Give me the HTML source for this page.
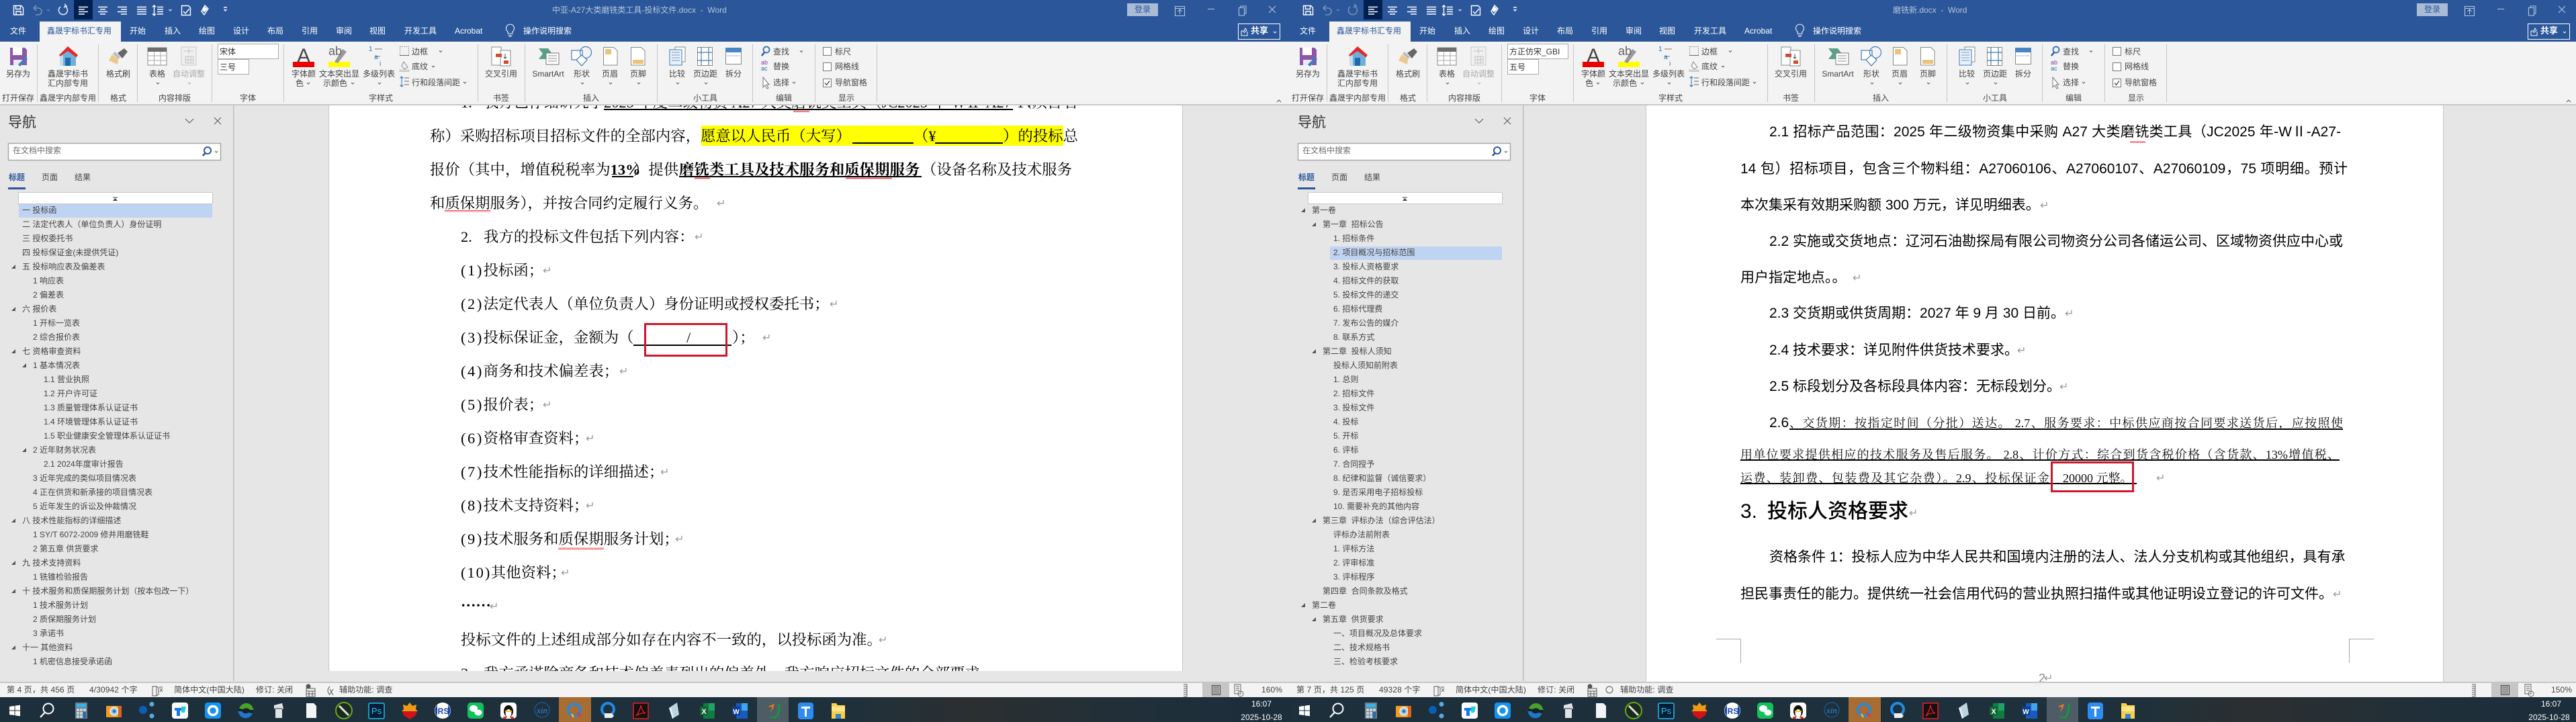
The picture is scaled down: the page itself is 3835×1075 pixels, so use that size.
<!DOCTYPE html>
<html lang="zh-CN"><head><meta charset="utf-8"><title>Word</title>
<style>
*{box-sizing:border-box}
html,body{margin:0;padding:0;width:3835px;height:1075px;overflow:hidden;background:#e6e6e6}
.w{position:absolute;top:0;height:1075px;overflow:hidden;font:12px/16px "Liberation Sans","Noto Sans CJK SC",sans-serif;color:#444;background:#e6e6e6}
.a{position:absolute;white-space:nowrap}
.c{transform:translateX(-50%)}
.r0{position:absolute}
.lab{top:138px}.l1{top:102px}.l2x{top:116px}
.ww{color:#fff}
.ti{top:7px;color:#b4c4dc}
.tab{top:38px;color:#fff}
svg.o{position:absolute;left:0;top:0}
.nav{position:absolute;left:0;top:303px;width:345px}
.n{position:relative;height:21px;line-height:21px;padding-left:33px;white-space:pre;color:#444}
.n.b{padding-left:49px}.n.e{padding-left:65px}
.n.t::before{content:"";position:absolute;left:17px;top:7px;width:6px;height:6px;background:#555;clip-path:polygon(100% 0,100% 100%,0 100%)}
.n.b.t::before{left:33px}
.doc{position:absolute;left:0;top:0;width:100%;height:100%}
.d1{position:absolute;white-space:nowrap;font:22.4px/30px "Liberation Serif","Noto Serif CJK SC",serif;color:#000}
.d2{position:absolute;white-space:nowrap;font:21px/30px "Liberation Sans","Noto Sans CJK SC",sans-serif;color:#000}
.d3{position:absolute;white-space:nowrap;font:18px/26px "Liberation Serif","Noto Serif CJK SC",serif;color:#111}
.j{text-align:justify;text-align-last:justify}
.q{display:inline-block;width:33.6px;text-align:center;letter-spacing:2.6px}
.q2{display:inline-block;width:44.8px;text-align:center;letter-spacing:2px}
.r{position:absolute;font:16px/20px "DejaVu Sans",sans-serif;color:#999}
.u{position:absolute;height:2px;background:#000}
.st{top:1019px;color:#444;letter-spacing:.1px}
.clk{color:#fff;text-align:center}
</style></head><body>

<svg width="0" height="0" style="position:absolute"><defs>
<pattern id="sq" width="4" height="3" patternUnits="userSpaceOnUse"><path d="M0 2.400L1 .6 2 2.400 3 .6 4 2.400" stroke="#e60000" fill="none" stroke-width=".6"/></pattern>
<g id="rb">
<rect x="110" y="0" width="28" height="29" fill="#002050"/>
<g fill="none" stroke="#fff" stroke-width="1.400">
<path d="M20.500 8.500h11l3 3v10.500h-14z M23.500 8.500v5h7v-5 M24 22v-5h7v5"/>
<path d="M117 10.500h14M117 14h9M117 17.500h14M117 21h9"/>
<path d="M146 10.500h14M149 14h8M146 17.500h14M149 21h8"/>
<path d="M175 10.500h14M180 14h9M175 17.500h14M180 21h9"/>
<path d="M204 10.500h14M204 14h14M204 17.500h14M204 21h14"/>
<path d="M229.500 8v15M227 10.500l2.500-2.500 2.500 2.500M227 20.500l2.500 2.500 2.500-2.500M234 10.500h9M234 14h9M234 17.500h9M234 21h9"/>
<path d="M270.500 8.500h10l3 3v11h-13zM273 17l3 3 6-7"/>
<path d="M305 8l5 5-6 9-4-5z"/>
<path d="M333 11h5M333.500 14l2 2 2-2"/>
<path d="M251.500 14l2 2 2-2" stroke-width="1"/>
</g>
<path d="M304 9l5 4.500-5 5-3.500-4z" fill="#fff"/>
<g fill="none" stroke="#7891bb" stroke-width="1.600"><path d="M50 12l4-4M50 12l4 4M50 12h7a5 5 0 0 1 0 10h-4"/><path d="M70 14l2 2 2-2" stroke-width="1"/></g>
<g fill="none" stroke="#b4c4dc" stroke-width="1.100">
<path d="M1749.500 9.500h14v14h-14zM1749.500 12.500h14M1756.500 21v-7M1753.500 17l3-3 3 3"/>
<path d="M1798 13.500h10"/>
<path d="M1844.500 11.500h8v11.500h-8zM1847 11.500v-2.500h8v11h-2.500"/>
<path d="M1889 9l10 10M1899 9l-10 10"/>
</g>
<rect x="1843.500" y="35.500" width="62" height="23" fill="none" stroke="#fff"/>
<g fill="none" stroke="#fff" stroke-width="1"><path d="M1848 46h3M1848 46v7h9v-6M1851 48l3-6 2 3-4 4"/><path d="M1896 47l2 2 2-2"/></g>
<path d="M756 61a6 6 0 1 1 7 0v3h-7z" transform="translate(0,-14)" fill="none" stroke="#e8eef7" stroke-width="1.100"/><path d="M756.500 52.500h6M757.500 54.500h4" stroke="#e8eef7"/>
<path d="M55.500 66v86M146.500 66v86M204.500 66v86M315.500 66v86M422.500 66v86M711.500 66v86M781.500 66v86M978.500 66v86M1120.500 66v86M1213.500 66v86M1305.500 66v86" stroke="#c6c6c6" fill="none"/>
<path d="M15 71h22l3 3v23h-25z" fill="#8b58a8"/><rect x="19" y="71" width="14" height="11" fill="#fff"/><rect x="20" y="89" width="13" height="8" fill="#fff" opacity=".85"/><path d="M27 96l11-11 3 3-11 11z" fill="#3c7fc0"/>
<path d="M88 82l13-13 15 13-3 4-12-9-10 9z" fill="#e2282c"/><path d="M89 84l12-8 12 9v13h-24z" fill="#6fb0d8"/><path d="M97 98v-12h8v12z" fill="#1d6ab0"/><path d="M89 84l5-2v16h-5z" fill="#c8dcea"/>
<path d="M176 88l-9-7-5 9 13 6z" fill="#ecc98b"/><path d="M168 80l8 8 3-3-8-8z" fill="#bbb"/><path d="M175 79l10-7 5 5-8 10z" fill="#666"/>
<rect x="220" y="71" width="28" height="26" fill="#fff" stroke="#888"/><rect x="220" y="71" width="28" height="6" fill="#6e6e6e"/><path d="M229.500 77v20M239 77v20M220 83h28M220 90h28" stroke="#aaa" fill="none"/>
<g opacity=".55"><rect x="270" y="70" width="22" height="27" fill="#eee" stroke="#aaa"/><path d="M274 76h14M281 72v8M276 84h12v10h-12zM280 84v10M284 84v10M276 89h12" stroke="#999" fill="none"/></g>
<rect x="436" y="92" width="32" height="8" fill="#ee0000"/>
<rect x="489" y="92" width="32" height="8" fill="#ffff00"/>
<path d="M498 92l12-19 6 4-13 17z" fill="#999"/>
<path d="M558 73h11M558 84h8" stroke="#777" fill="none"/>
<rect x="595.500" y="69.500" width="13" height="13" fill="none" stroke="#888" stroke-dasharray="1.500 1.500"/><path d="M595 82.500h14" stroke="#666"/>
<path d="M601 92l6 8-5 3-4-5z" fill="none" stroke="#888"/><rect x="595" y="104" width="14" height="2.500" fill="#ddd" stroke="#aaa" stroke-width=".6"/>
<path d="M598 114v15M595.500 116.500l2.500-2.500 2.500 2.500M595.500 126.500l2.500 2.500 2.500-2.500" stroke="#2b6cb0" fill="none"/><path d="M602 116h7M602 121h7M602 126h7" stroke="#666" fill="none"/>
<rect x="732" y="70" width="14" height="27" fill="#fff" stroke="#888"/><rect x="745" y="75" width="15" height="23" fill="#fff" stroke="#888"/><rect x="738" y="80" width="9" height="5" fill="#d34a30"/><rect x="750" y="90" width="7" height="5" fill="#d34a30"/><path d="M752 80v7M750 85l2 2 2-2" stroke="#444" fill="none"/>
<path d="M802 72h14l6 8-5 8h-15l6-8z" fill="#5aa088"/><rect x="813" y="79" width="19" height="17" fill="#fff" stroke="#777"/><path d="M816 83h13M816 87h13M816 91h13" stroke="#888"/>
<rect x="851" y="75" width="16" height="14" fill="#fff" stroke="#3f7ab5" stroke-width="1.200"/><circle cx="872" cy="78" r="8.500" fill="none" stroke="#3f7ab5" stroke-width="1.200"/><path d="M866 82l8 7-8 9-8-9z" fill="#fff" stroke="#3f7ab5" stroke-width="1.200"/>
<path d="M898.500 70.500h15l5.500 5v21.500h-20.500z" fill="#fff" stroke="#888"/><rect x="901" y="73" width="9" height="8" fill="#ecc479"/>
<path d="M939.500 70.500h15l5.500 5v21.500h-20.500z" fill="#fff" stroke="#888"/><rect x="942" y="89" width="16" height="6" fill="#ecc479"/>
<rect x="1005" y="70" width="15" height="22" fill="#fff" stroke="#888"/><rect x="997" y="74" width="18" height="23" fill="#eaf1f8" stroke="#3f7ab5"/><path d="M1000 78h12M1000 82h12M1000 86h12M1000 90h12" stroke="#6e9cc7"/>
<rect x="1038.500" y="70.500" width="22" height="27" fill="#fff" stroke="#888"/><path d="M1044 70v27M1055 70v27M1038 78h23M1038 90h23" stroke="#3f7ab5" fill="none" stroke-width="1.200"/>
<rect x="1080.500" y="71.500" width="23" height="24" fill="#fff" stroke="#888"/><rect x="1080" y="71" width="24" height="7" fill="#4a86c0"/><path d="M1082 83h20" stroke="#3f7ab5" stroke-dasharray="1 1"/>
<circle cx="1141" cy="74" r="4.500" fill="none" stroke="#3f7ab5" stroke-width="2"/><path d="M1138 78l-4 5" stroke="#2b579a" stroke-width="2.500"/>
<path d="M1136 115l0 15 3-3 3 5 2-1-3-5h4z" fill="#fff" stroke="#777"/>
<rect x="1225.500" y="70.500" width="12" height="12" fill="#fff" stroke="#777"/><rect x="1225.500" y="93.500" width="12" height="12" fill="#fff" stroke="#777"/><rect x="1225.500" y="117.500" width="12" height="12" fill="#fff" stroke="#777"/><path d="M1228 123.500l2.500 3 4.500-6" fill="none" stroke="#333" stroke-width="1.100"/>
<g fill="none" stroke="#555" stroke-width="1"><path d="M233 123l2 2 2-2M457 123l2 2 2-2M523 123l2 2 2-2M563 123l2 2 2-2M654 75.500l2 2 2-2M643 98l2 2 2-2M690 122l2 2 2-2M865 123l2 2 2-2M907 123l2 2 2-2M949 123l2 2 2-2M1007 123l2 2 2-2M1049 123l2 2 2-2M1191 75.500l2 2 2-2M1180 122l2 2 2-2M405 75l2.500 2.500 2.500-2.500M361 99l2.500 2.500 2.500-2.500M1901 152l3-3 3 3"/><path d="M280 123l2 2 2-2" stroke="#aaa"/></g>
<rect x="347" y="157" width="1.500" height="857" fill="#bdbdbd"/>
<g fill="none" stroke="#555" stroke-width="1"><path d="M276 177l6 6 6-6M319 175l10 10M329 175l-10 10"/></g>
<rect x="12.500" y="213.500" width="316" height="25" fill="#fff" stroke="#a9a9a9" stroke-width="1.500"/>
<circle cx="309" cy="224" r="5" fill="none" stroke="#2b579a" stroke-width="2"/><path d="M305.500 228l-3.500 4" stroke="#2b579a" stroke-width="2.500"/><path d="M320 225l2 2 2-2" fill="none" stroke="#555"/>
<rect x="12" y="279" width="26" height="3" fill="#2b579a"/>
<rect x="27.500" y="286.500" width="289" height="17" fill="#fff" stroke="#c6c6c6"/>
<path d="M168 294h7" stroke="#444"/><path d="M171.500 295l3.500 4h-7z" fill="#444"/>
</g>
<g id="tb">
<g fill="#fff"><path d="M14 1052l7.500-1v6.500H14zM22.500 1050.800l7.500-1v7.700h-7.500zM14 1058.500h7.500v6.500L14 1064zM22.500 1058.500H30v7.700l-7.500-1z"/></g>
<circle cx="72" cy="1055" r="7.500" fill="none" stroke="#fff" stroke-width="2"/><path d="M66.500 1061l-6.500 7" stroke="#fff" stroke-width="2.200"/>
<rect x="112" y="1046" width="18" height="24" fill="#6e7f8e"/><rect x="114" y="1048" width="14" height="5" fill="#35b3e8"/><path d="M114 1055h4v4h-4zM119 1055h4v4h-4zM124 1055h4v4h-4zM114 1060h4v4h-4zM119 1060h4v4h-4zM114 1065h4v4h-4zM119 1065h4v4h-4z" fill="#c8d3db"/><rect x="124" y="1060" width="4" height="9" fill="#1d6ab0"/>
<rect x="158" y="1051" width="23" height="17" rx="1" fill="#f39a1f"/><circle cx="170" cy="1059" r="6" fill="#9fd0ee" stroke="#eee" stroke-width="1.500"/><circle cx="170" cy="1059" r="2.500" fill="#3a6ea8"/><rect x="176" y="1051" width="5" height="17" fill="#d9661a"/>
<circle cx="213" cy="1057" r="6" fill="#0a5db8"/><circle cx="226" cy="1048.500" r="3.500" fill="#5ba8dc"/><circle cx="226" cy="1066" r="3.500" fill="#5ba8dc"/>
<rect x="256" y="1046" width="24" height="24" rx="4" fill="#fff"/><path d="M260 1054h11v4h-3v8h-5v-8h-3z" fill="#1676f0"/><path d="M270 1052h7l-2 9h-5z" fill="#1bd1d6"/>
<rect x="305" y="1046" width="24" height="24" rx="4" fill="#1693f2"/><circle cx="317" cy="1058" r="6.500" fill="none" stroke="#fff" stroke-width="3.500"/>
<circle cx="366" cy="1058" r="11" fill="#16222a"/><path d="M356 1055a11 11 0 0 1 19-4l3 6-6 0a7 7 0 0 0-10-1z" fill="#4aa12a"/><path d="M376 1062a11 11 0 0 1-19 3l-3-6h6a7 7 0 0 0 10 2z" fill="#2277c8"/>
<path d="M408 1050l12-3 2 8-2 1v13h-10v-13l-2-1z" fill="#dfe3e6"/><rect x="409" y="1054" width="11" height="2" fill="#888"/>
<path d="M456 1047h11l4 4v18h-15z" fill="#f2f4f6"/>
<circle cx="512" cy="1058" r="12" fill="#1a2a20" stroke="#6aa51a" stroke-width="2"/><path d="M505 1051l14 14" stroke="#dfe8d8" stroke-width="3"/>
<rect x="549" y="1047" width="23" height="23" rx="2" fill="#001d34" stroke="#22bcf2" stroke-width="1.500"/><text x="560.500" y="1063" font-family="Liberation Sans" font-size="13" fill="#31c5f4" text-anchor="middle">Ps</text>
<path d="M610 1046l4 5 6-2-1 7 3 3h-24l3-3-1-7 6 2z" fill="#f09a14"/><path d="M599 1059h22l-2 6-9 6-9-6z" fill="#d2121a"/>
<circle cx="659" cy="1058" r="12" fill="#fff"/><path d="M651 1050a11 11 0 0 0 0 16z" fill="#1746a8"/><path d="M667 1050a11 11 0 0 1 0 16z" fill="#1746a8"/><text x="660" y="1063" font-family="Liberation Sans" font-size="12" font-weight="bold" fill="#1746a8" text-anchor="middle">RS</text>
<rect x="696" y="1046" width="24" height="24" rx="5" fill="#12c15c"/><ellipse cx="705" cy="1055" rx="6" ry="5" fill="#fff"/><ellipse cx="712" cy="1061" rx="5.500" ry="4.500" fill="#fff"/>
<rect x="745" y="1046" width="24" height="24" rx="5" fill="#fff"/><ellipse cx="757" cy="1059" rx="7" ry="9" fill="#111"/><ellipse cx="757" cy="1062" rx="4.500" ry="6" fill="#fff"/><path d="M752 1058h10v2h-10z" fill="#f2c010"/><path d="M750 1067h5l-2 3h-5zM759 1067h5l2 3h-5z" fill="#e8311d"/>
<circle cx="807" cy="1057" r="11" fill="none" stroke="#2563a5" stroke-width="1"/><text x="807" y="1062" font-family="Liberation Serif" font-size="13" font-style="italic" fill="#2d8be0" text-anchor="middle">xin</text>
<circle cx="855" cy="1057" r="9" fill="none" stroke="#1c8ce8" stroke-width="3.500"/><path d="M859 1061l6 6" stroke="#e33" stroke-width="2.500"/><path d="M851 1063l3 5" stroke="#f0c020" stroke-width="2.500"/>
<circle cx="905" cy="1056" r="9" fill="none" stroke="#1d8be8" stroke-width="4"/><path d="M900 1062h11l3 4-3 3h-11z" fill="#eee"/>
<rect x="943" y="1047" width="22" height="23" fill="#111" stroke="#ec1c24" stroke-width="1.500"/><path d="M954 1050c-1 7-4 12-7 16 3-3 9-5 14-4-4-2-6-7-7-12z" fill="none" stroke="#ec1c24" stroke-width="1.300"/>
<path d="M996 1054l12-8 3 18-10 6z" fill="#bcd4e0"/><path d="M996 1054l5 16 2-1-4-15z" fill="#eef4f7"/>
<rect x="1047" y="1047" width="17" height="23" rx="1" fill="#107c41"/><rect x="1055" y="1047" width="9" height="11" fill="#21a366"/><rect x="1042" y="1052" width="12" height="13" fill="#0e6534"/><text x="1048" y="1063" font-family="Liberation Sans" font-size="11" font-weight="bold" fill="#fff" text-anchor="middle">X</text>
<rect x="1096" y="1047" width="17" height="23" rx="1" fill="#185abd"/><rect x="1104" y="1047" width="9" height="11" fill="#41a5ee"/><rect x="1090" y="1052" width="12" height="13" fill="#103f91"/><text x="1096" y="1063" font-family="Liberation Sans" font-size="10" font-weight="bold" fill="#fff" text-anchor="middle">W</text>
<rect x="1127" y="1038" width="47" height="37" fill="#4e5c66"/>
<path d="M1160 1048c0 12-1 18-8 21" fill="none" stroke="#0e9a3c" stroke-width="3"/><path d="M1143 1052l10-4-2 7-5 6 4-8z" fill="#e8761c"/><path d="M1146 1067c3 2 5 2 8 0" stroke="#0e9a3c" stroke-width="2" fill="none"/>
<rect x="1188" y="1046" width="23" height="25" rx="4" fill="#2e8cf0"/><path d="M1193 1052h13v3h-5v12h-3v-12h-5z" fill="#fff"/>
<path d="M1238 1047h7l2 3h11v20h-20z" fill="#f9cf4a"/><rect x="1238" y="1052" width="20" height="7" fill="#fee48a"/><path d="M1244 1070v-7h8v7z" fill="#2d87d8"/>
</g>
</defs></svg>

<!-- WINDOW 1 -->
<div class="w" style="left:0;width:1920px">
<div class="r0" style="left:0;top:0;width:1920px;height:62px;background:#2b579a"></div>
<div class="r0" style="left:59px;top:32px;width:121px;height:30px;background:#f3f3f3"></div>
<div class="r0" style="left:0;top:62px;width:1920px;height:95px;background:#f3f3f3;border-bottom:2px solid #c6c6c6"></div>
<div class="r0" style="left:489px;top:157px;width:1272px;height:842px;background:#fff;border-left:1px solid #c8c8c8;border-right:1px solid #c8c8c8"></div>
<div class="r0" style="left:0;top:1015px;width:1920px;height:23px;background:#f3f3f3;border-top:2px solid #c6c6c6"></div>
<div class="r0" style="left:0;top:1038px;width:1920px;height:37px;background:linear-gradient(90deg,#1c2f3b 0,#1e303c 65%,#2b2f30 75%,#1f2f3a 90%,#1c2e3a 100%)"></div>
<div class="r0" style="left:832px;top:1038px;width:48px;height:37px;background:#a96c32"></div>
<div class="r0" style="left:28px;top:304px;width:288px;height:20px;background:#bfd3f2"></div>
<div class="r0" style="left:1790px;top:1017px;width:40px;height:21px;background:#c6c6c6"></div>
<svg class="o" width="1920" height="1075"><use href="#rb"/><use href="#tb"/>
<g fill="none" stroke="#e6ebf3" stroke-width="1.500"><path d="M90 10a6.500 6.500 0 1 0 6-1M96 6l3 3-4 2"/></g>
<g fill="none" stroke="#555">
<path d="M227 1022h6v14h-6zM233 1022l3 2v10l-3 2M237 1023h5M238 1025l4 5M242 1025l-4 5" stroke-width=".9"/>
<path d="M456 1025h13v12h-13zM456 1029h13M460 1029v8M465 1029v8M456 1033h13"/><circle cx="459" cy="1022" r="3" fill="#555"/>
<path d="M1762 1019h5v18h-5M1762 1022h5M1762 1025h5M1762 1028h5M1762 1031h5M1762 1034h5" stroke="#666"/>
<rect x="1804.500" y="1020.500" width="12" height="14" stroke="#444"/><path d="M1806 1023h9M1806 1026h9M1806 1029h9M1806 1032h9" stroke="#444"/>
<path d="M1838 1019h9v14h-9zM1840 1022h5M1840 1025h5M1840 1028h5" stroke="#666"/><circle cx="1847" cy="1033" r="4" stroke="#666"/>
<path d="M491 1022c-4 4-4 9 0 12M491 1026l5 9M496 1026l-6 9" stroke="#555"/></g>
</svg>
<span class="a ti" style="left:822px">中亚-A27大类磨铣类工具-投标文件.docx&nbsp;&nbsp;-&nbsp;&nbsp;Word</span>
<div class="a" style="left:1678px;top:5px;width:46px;height:19px;background:#aabbd5;color:#2b579a;text-align:center;line-height:19px;font-size:12px">登录</div>
<span class="a ww" style="left:1862px;top:38px;font-size:13px;font-weight:bold">共享</span>
<span class="a tab" style="left:15px">文件</span>
<span class="a" style="left:70px;top:38px;color:#2b579a">鑫晟宇标书汇专用</span>
<span class="a tab" style="left:193px">开始</span><span class="a tab" style="left:245px">插入</span><span class="a tab" style="left:296px">绘图</span><span class="a tab" style="left:347px">设计</span><span class="a tab" style="left:398px">布局</span><span class="a tab" style="left:449px">引用</span><span class="a tab" style="left:500px">审阅</span><span class="a tab" style="left:550px">视图</span><span class="a tab" style="left:602px">开发工具</span><span class="a tab" style="left:677px">Acrobat</span><span class="a tab" style="left:779px">操作说明搜索</span>

<span class="a c l1" style="left:27px">另存为</span>
<span class="a c l1" style="left:101px">鑫晟宇标书</span><span class="a c l2x" style="left:101px">汇内部专用</span>
<span class="a c l1" style="left:176px">格式刷</span>
<span class="a c l1" style="left:234px">表格</span>
<span class="a c l1" style="left:281px;color:#aaa">自动调整</span>
<div class="a" style="left:324px;top:65px;width:91px;height:23px;background:#fff;border:1px solid #ababab;padding:3px 2px;color:#333">宋体</div>
<div class="a" style="left:324px;top:88px;width:47px;height:23px;background:#fff;border:1px solid #ababab;padding:3px 2px;color:#333">三号</div>
<span class="a c" style="left:452px;top:67px;font:30px/34px 'Liberation Sans',sans-serif;color:#444">A</span>
<span class="a" style="left:489px;top:66px;font:18px/20px 'Liberation Sans',sans-serif;color:#666">ab</span>
<svg class="o" width="620" height="110"><text x="549" y="76" font-family="Liberation Sans" font-size="10" fill="#2b6cb0">1</text><text x="557" y="88" font-family="Liberation Sans" font-size="10" fill="#2b6cb0">a</text><text x="565" y="98" font-family="Liberation Sans" font-size="10" fill="#2b6cb0">i</text></svg>
<span class="a c l1" style="left:452px">字体颜</span><span class="a c l2x" style="left:446px">色</span>
<span class="a c l1" style="left:505px">文本突出显</span><span class="a c l2x" style="left:499px">示颜色</span>
<span class="a c l1" style="left:564px">多级列表</span>
<span class="a" style="left:613px;top:69px">边框</span><span class="a" style="left:613px;top:91px">底纹</span><span class="a" style="left:613px;top:115px">行和段落间距</span>
<span class="a c l1" style="left:746px">交叉引用</span>
<span class="a c l1" style="left:816px">SmartArt</span><span class="a c l1" style="left:866px">形状</span><span class="a c l1" style="left:908px">页眉</span><span class="a c l1" style="left:950px">页脚</span>
<span class="a c l1" style="left:1008px">比较</span><span class="a c l1" style="left:1050px">页边距</span><span class="a c l1" style="left:1092px">拆分</span>
<span class="a" style="left:1151px;top:69px">查找</span><span class="a" style="left:1151px;top:91px">替换</span><span class="a" style="left:1151px;top:115px">选择</span>
<span class="a" style="left:1133px;top:89px;font:9px/9px 'Liberation Sans',sans-serif;color:#7a3fa0">ab</span><span class="a" style="left:1133px;top:98px;font:9px/9px 'Liberation Sans',sans-serif;color:#2b6cb0">ac</span>
<span class="a" style="left:1243px;top:69px">标尺</span><span class="a" style="left:1243px;top:91px">网格线</span><span class="a" style="left:1243px;top:115px">导航窗格</span>
<span class="a lab" style="left:3px">打开保存</span><span class="a lab" style="left:59px">鑫晟宇内部专用</span><span class="a lab" style="left:164px">格式</span><span class="a lab" style="left:236px">内容排版</span><span class="a lab" style="left:357px">字体</span><span class="a lab" style="left:549px">字样式</span><span class="a lab" style="left:734px">书签</span><span class="a lab" style="left:868px">插入</span><span class="a lab" style="left:1032px">小工具</span><span class="a lab" style="left:1155px">编辑</span><span class="a lab" style="left:1248px">显示</span>

<span class="a" style="left:12px;top:171px;font-size:21px;line-height:24px;color:#333">导航</span>
<span class="a" style="left:19px;top:216px;color:#6d6d6d">在文档中搜索</span>
<span class="a" style="left:13px;top:256px;color:#2b579a;font-weight:bold">标题</span><span class="a" style="left:62px;top:256px">页面</span><span class="a" style="left:111px;top:256px">结果</span>

<div class="nav">
<div class="n">一 投标函</div>
<div class="n">二 法定代表人（单位负责人）身份证明</div>
<div class="n">三 授权委托书</div>
<div class="n">四 投标保证金(未提供凭证)</div>
<div class="n t">五 投标响应表及偏差表</div>
<div class="n b">1 响应表</div>
<div class="n b">2 偏差表</div>
<div class="n t">六 报价表</div>
<div class="n b">1 开标一览表</div>
<div class="n b">2 综合报价表</div>
<div class="n t">七 资格审查资料</div>
<div class="n b t">1 基本情况表</div>
<div class="n e">1.1 营业执照</div>
<div class="n e">1.2 开户许可证</div>
<div class="n e">1.3 质量管理体系认证证书</div>
<div class="n e">1.4 环境管理体系认证证书</div>
<div class="n e">1.5 职业健康安全管理体系认证证书</div>
<div class="n b t">2 近年财务状况表</div>
<div class="n e">2.1 2024年度审计报告</div>
<div class="n b">3 近年完成的类似项目情况表</div>
<div class="n b">4 正在供货和新承接的项目情况表</div>
<div class="n b">5 近年发生的诉讼及仲裁情况</div>
<div class="n t">八 技术性能指标的详细描述</div>
<div class="n b">1 SY/T 6072-2009 修井用磨铣鞋</div>
<div class="n b">2 第五章 供货要求</div>
<div class="n t">九 技术支持资料</div>
<div class="n b">1 铣锥检验报告</div>
<div class="n t">十 技术服务和质保期服务计划（按本包改一下）</div>
<div class="n b">1 技术服务计划</div>
<div class="n b">2 质保期服务计划</div>
<div class="n b">3 承诺书</div>
<div class="n t">十一 其他资料</div>
<div class="n b">1 机密信息接受承诺函</div>
</div>

<div class="doc" style="clip-path:inset(157px 0 76px 0)">
<div class="r0" style="left:1044px;top:187px;width:539px;height:30px;background:#ffff00"></div>
<div class="d1" style="left:686px;top:138px">1.</div><div class="d1" style="left:720px;top:138px">我方已仔细研究了</div>
<div class="d1 j" style="left:899px;top:138px;width:609px">2025 年度二级物资 A27 大类磨铣类工具（JC2025 年-WⅡ-A27-14）</div>
<div class="d1" style="left:1514px;top:138px">（项目名</div>
<div class="u" style="left:899px;top:162px;width:609px"></div>

<div class="d1" style="left:640px;top:188px">称）采购招标项目招标文件的全部内容，愿意以人民币（大写）</div>
<div class="d1" style="left:1360px;top:188px">（¥</div><div class="d1" style="left:1493px;top:188px">）的投标总</div>
<div class="u" style="left:1269px;top:212px;width:91px"></div><div class="u" style="left:1392px;top:212px;width:101px"></div>

<div class="d1" style="left:640px;top:238px">报价（其中，增值税税率为<b>13%</b></div>
<div class="d1" style="left:943px;top:238px">）提供</div>
<div class="d1" style="left:1011px;top:238px;font-weight:bold">磨铣类工具及技术服务和质保期服务</div>
<div class="d1" style="left:1372px;top:238px">（设备名称及技术服务</div>
<div class="u" style="left:911px;top:262px;width:32px"></div><div class="u" style="left:1011px;top:262px;width:361px"></div>

<div class="d1" style="left:640px;top:288px">和质保期服务），并按合同约定履行义务。</div><span class="r" style="left:1067px;top:293px">↵</span>
<div class="d1" style="left:686px;top:338px">2.</div><div class="d1" style="left:720px;top:338px">我方的投标文件包括下列内容：</div><span class="r" style="left:1034px;top:343px">↵</span>
<div class="d1" style="left:686px;top:388px"><span class="q">(1)</span>投标函；</div><span class="r" style="left:808px;top:393px">↵</span>
<div class="d1" style="left:686px;top:438px"><span class="q">(2)</span>法定代表人（单位负责人）身份证明或授权委托书；</div><span class="r" style="left:1235px;top:443px">↵</span>
<div class="d1" style="left:686px;top:488px"><span class="q">(3)</span>投标保证金，金额为（</div>
<div class="d1" style="left:1022px;top:488px">/</div><div class="d1" style="left:1090px;top:488px">）；</div><span class="r" style="left:1135px;top:493px">↵</span>
<div class="u" style="left:943px;top:513px;width:146px"></div>
<div class="r0" style="left:959px;top:481px;width:124px;height:50px;border:3.500px solid #d0162a"></div>
<div class="d1" style="left:686px;top:538px"><span class="q">(4)</span>商务和技术偏差表；</div><span class="r" style="left:922px;top:543px">↵</span>
<div class="d1" style="left:686px;top:588px"><span class="q">(5)</span>报价表；</div><span class="r" style="left:808px;top:593px">↵</span>
<div class="d1" style="left:686px;top:638px"><span class="q">(6)</span>资格审查资料；</div><span class="r" style="left:872px;top:643px">↵</span>
<div class="d1" style="left:686px;top:688px"><span class="q">(7)</span>技术性能指标的详细描述；</div><span class="r" style="left:983px;top:693px">↵</span>
<div class="d1" style="left:686px;top:738px"><span class="q">(8)</span>技术支持资料；</div><span class="r" style="left:872px;top:743px">↵</span>
<div class="d1" style="left:686px;top:788px"><span class="q">(9)</span>技术服务和质保期服务计划；</div><span class="r" style="left:1005px;top:793px">↵</span>
<div class="d1" style="left:686px;top:838px"><span class="q2">(10)</span>其他资料；</div><span class="r" style="left:835px;top:843px">↵</span>
<div class="d1" style="left:686px;top:881px;font-weight:bold">……</div><span class="r" style="left:729px;top:893px">↵</span>
<div class="d1" style="left:686px;top:938px">投标文件的上述组成部分如存在内容不一致的，以投标函为准。</div><span class="r" style="left:1308px;top:943px">↵</span>
<div class="d1" style="left:686px;top:988px">3.</div><div class="d1" style="left:720px;top:988px">我方承诺除商务和技术偏差表列出的偏差外，我方响应招标文件的全部要求。</div>
<svg class="o" width="1920" height="1075"><g fill="url(#sq)"><rect x="1181" y="164" width="24" height="3"/><rect x="1034" y="264" width="23" height="3"/><rect x="1259" y="264" width="69" height="3"/><rect x="662" y="313" width="68" height="3"/><rect x="831" y="815" width="68" height="3"/></g></svg>
</div>

<span class="a st" style="left:10px">第 4 页，共 456 页</span>
<span class="a st" style="left:133px">4/30942 个字</span>
<span class="a st" style="left:259px">简体中文(中国大陆)</span>
<span class="a st" style="left:381px">修订: 关闭</span>
<span class="a st" style="left:505px">辅助功能: 调查</span>
<span class="a st" style="left:1878px">160%</span>
<div class="a clk" style="left:1838px;top:1040px;width:80px">16:07</div>
<div class="a clk" style="left:1838px;top:1060px;width:80px">2025-10-28</div>
</div>

<!-- WINDOW 2 -->
<div class="w" style="left:1920px;width:1915px">
<div class="r0" style="left:0;top:0;width:1915px;height:62px;background:#2b579a"></div>
<div class="r0" style="left:59px;top:32px;width:121px;height:30px;background:#f3f3f3"></div>
<div class="r0" style="left:0;top:62px;width:1915px;height:95px;background:#f3f3f3;border-bottom:2px solid #c6c6c6"></div>
<div class="r0" style="left:530px;top:157px;width:1188px;height:858px;background:#fff;border-left:1px solid #c8c8c8;border-right:1px solid #c8c8c8"></div>
<div class="r0" style="left:0;top:1015px;width:1915px;height:23px;background:#f3f3f3;border-top:2px solid #c6c6c6"></div>
<div class="r0" style="left:0;top:1038px;width:1915px;height:37px;background:linear-gradient(90deg,#1c2f3b 0,#1e303c 65%,#2b2f30 75%,#1f2f3a 90%,#1c2e3a 100%)"></div>
<div class="r0" style="left:832px;top:1038px;width:48px;height:37px;background:#a96c32"></div>
<div class="r0" style="left:60px;top:367px;width:256px;height:20px;background:#bfd3f2"></div>
<div class="r0" style="left:1789px;top:1017px;width:40px;height:21px;background:#c6c6c6"></div>
<svg class="o" width="1915" height="1075"><use href="#rb"/><use href="#tb"/>
<g fill="none" stroke="#7891bb" stroke-width="1.500"><path d="M90 10a6.500 6.500 0 1 0 6-1M96 6l3 3-4 2"/></g>
<g fill="none" stroke="#555"><path d="M215 1022h6v14h-6zM221 1022l3 2v10l-3 2M225 1023h5M226 1025l4 5M230 1025l-4 5" stroke-width=".9"/>
<path d="M444 1025h13v12h-13zM444 1029h13M448 1029v8M453 1029v8M444 1033h13"/><circle cx="447" cy="1022" r="3" fill="#555"/><circle cx="476" cy="1027" r="5"/>
<path d="M1760 1019h5v18h-5M1760 1022h5M1760 1025h5M1760 1028h5M1760 1031h5M1760 1034h5" stroke="#666"/>
<rect x="1803.500" y="1020.500" width="12" height="14" stroke="#444"/><path d="M1805 1023h9M1805 1026h9M1805 1029h9M1805 1032h9" stroke="#444"/>
<path d="M1839 1019h9v14h-9zM1841 1022h5M1841 1025h5M1841 1028h5" stroke="#666"/><circle cx="1848" cy="1033" r="4" stroke="#666"/></g>
</svg>
<span class="a ti" style="left:898px">磨铣新.docx&nbsp;&nbsp;-&nbsp;&nbsp;Word</span>
<div class="a" style="left:1678px;top:5px;width:46px;height:19px;background:#aabbd5;color:#2b579a;text-align:center;line-height:19px;font-size:12px">登录</div>
<span class="a ww" style="left:1862px;top:38px;font-size:13px;font-weight:bold">共享</span>
<span class="a tab" style="left:15px">文件</span>
<span class="a" style="left:70px;top:38px;color:#2b579a">鑫晟宇标书汇专用</span>
<span class="a tab" style="left:193px">开始</span><span class="a tab" style="left:245px">插入</span><span class="a tab" style="left:296px">绘图</span><span class="a tab" style="left:347px">设计</span><span class="a tab" style="left:398px">布局</span><span class="a tab" style="left:449px">引用</span><span class="a tab" style="left:500px">审阅</span><span class="a tab" style="left:550px">视图</span><span class="a tab" style="left:602px">开发工具</span><span class="a tab" style="left:677px">Acrobat</span><span class="a tab" style="left:779px">操作说明搜索</span>

<span class="a c l1" style="left:27px">另存为</span>
<span class="a c l1" style="left:101px">鑫晟宇标书</span><span class="a c l2x" style="left:101px">汇内部专用</span>
<span class="a c l1" style="left:176px">格式刷</span>
<span class="a c l1" style="left:234px">表格</span>
<span class="a c l1" style="left:281px;color:#aaa">自动调整</span>
<div class="a" style="left:324px;top:65px;width:91px;height:23px;background:#fff;border:1px solid #ababab;padding:3px 2px;color:#333;overflow:hidden;font-size:12px">方正仿宋_GBI</div>
<div class="a" style="left:324px;top:88px;width:47px;height:23px;background:#fff;border:1px solid #ababab;padding:3px 2px;color:#333">五号</div>
<span class="a c" style="left:452px;top:67px;font:30px/34px 'Liberation Sans',sans-serif;color:#444">A</span>
<span class="a" style="left:489px;top:66px;font:18px/20px 'Liberation Sans',sans-serif;color:#666">ab</span>
<svg class="o" width="620" height="110"><text x="549" y="76" font-family="Liberation Sans" font-size="10" fill="#2b6cb0">1</text><text x="557" y="88" font-family="Liberation Sans" font-size="10" fill="#2b6cb0">a</text><text x="565" y="98" font-family="Liberation Sans" font-size="10" fill="#2b6cb0">i</text></svg>
<span class="a c l1" style="left:452px">字体颜</span><span class="a c l2x" style="left:446px">色</span>
<span class="a c l1" style="left:505px">文本突出显</span><span class="a c l2x" style="left:499px">示颜色</span>
<span class="a c l1" style="left:564px">多级列表</span>
<span class="a" style="left:613px;top:69px">边框</span><span class="a" style="left:613px;top:91px">底纹</span><span class="a" style="left:613px;top:115px">行和段落间距</span>
<span class="a c l1" style="left:746px">交叉引用</span>
<span class="a c l1" style="left:816px">SmartArt</span><span class="a c l1" style="left:866px">形状</span><span class="a c l1" style="left:908px">页眉</span><span class="a c l1" style="left:950px">页脚</span>
<span class="a c l1" style="left:1008px">比较</span><span class="a c l1" style="left:1050px">页边距</span><span class="a c l1" style="left:1092px">拆分</span>
<span class="a" style="left:1151px;top:69px">查找</span><span class="a" style="left:1151px;top:91px">替换</span><span class="a" style="left:1151px;top:115px">选择</span>
<span class="a" style="left:1133px;top:89px;font:9px/9px 'Liberation Sans',sans-serif;color:#7a3fa0">ab</span><span class="a" style="left:1133px;top:98px;font:9px/9px 'Liberation Sans',sans-serif;color:#2b6cb0">ac</span>
<span class="a" style="left:1243px;top:69px">标尺</span><span class="a" style="left:1243px;top:91px">网格线</span><span class="a" style="left:1243px;top:115px">导航窗格</span>
<span class="a lab" style="left:3px">打开保存</span><span class="a lab" style="left:59px">鑫晟宇内部专用</span><span class="a lab" style="left:164px">格式</span><span class="a lab" style="left:236px">内容排版</span><span class="a lab" style="left:357px">字体</span><span class="a lab" style="left:549px">字样式</span><span class="a lab" style="left:734px">书签</span><span class="a lab" style="left:868px">插入</span><span class="a lab" style="left:1032px">小工具</span><span class="a lab" style="left:1155px">编辑</span><span class="a lab" style="left:1248px">显示</span>

<span class="a" style="left:12px;top:171px;font-size:21px;line-height:24px;color:#333">导航</span>
<span class="a" style="left:19px;top:216px;color:#6d6d6d">在文档中搜索</span>
<span class="a" style="left:13px;top:256px;color:#2b579a;font-weight:bold">标题</span><span class="a" style="left:62px;top:256px">页面</span><span class="a" style="left:111px;top:256px">结果</span>

<div class="nav">
<div class="n t">第一卷</div>
<div class="n b t">第一章&nbsp;&nbsp;招标公告</div>
<div class="n e">1. 招标条件</div>
<div class="n e">2. 项目概况与招标范围</div>
<div class="n e">3. 投标人资格要求</div>
<div class="n e">4. 招标文件的获取</div>
<div class="n e">5. 投标文件的递交</div>
<div class="n e">6. 招标代理费</div>
<div class="n e">7. 发布公告的媒介</div>
<div class="n e">8. 联系方式</div>
<div class="n b t">第二章&nbsp;&nbsp;投标人须知</div>
<div class="n e">投标人须知前附表</div>
<div class="n e">1. 总则</div>
<div class="n e">2. 招标文件</div>
<div class="n e">3. 投标文件</div>
<div class="n e">4. 投标</div>
<div class="n e">5. 开标</div>
<div class="n e">6. 评标</div>
<div class="n e">7. 合同授予</div>
<div class="n e">8. 纪律和监督（诚信要求）</div>
<div class="n e">9. 是否采用电子招标投标</div>
<div class="n e">10. 需要补充的其他内容</div>
<div class="n b t">第三章&nbsp;&nbsp;评标办法（综合评估法）</div>
<div class="n e">评标办法前附表</div>
<div class="n e">1. 评标方法</div>
<div class="n e">2. 评审标准</div>
<div class="n e">3. 评标程序</div>
<div class="n b">第四章&nbsp;&nbsp;合同条款及格式</div>
<div class="n t">第二卷</div>
<div class="n b t">第五章&nbsp;&nbsp;供货要求</div>
<div class="n e">一、项目概况及总体要求</div>
<div class="n e">二、技术规格书</div>
<div class="n e">三、检验考核要求</div>
</div>

<div class="doc" style="clip-path:inset(157px 0 60px 0)">
<div class="d2 j" style="left:714px;top:182px;width:851px">2.1 招标产品范围：2025 年二级物资集中采购 A27 大类磨铣类工具（JC2025 年-WⅡ-A27-</div>
<div class="d2 j" style="left:671px;top:237px;width:904px">14 包）招标项目，包含三个物料组：A27060106、A27060107、A27060109，75 项明细。预计</div>
<div class="d2" style="left:671px;top:291px">本次集采有效期采购额 300 万元，详见明细表。</div><span class="r" style="left:1117px;top:296px">↵</span>
<div class="d2 j" style="left:714px;top:345px;width:852px">2.2 实施或交货地点：辽河石油勘探局有限公司物资分公司各储运公司、区域物资供应中心或</div>
<div class="d2" style="left:671px;top:399px">用户指定地点。。</div><span class="r" style="left:838px;top:404px">↵</span>
<div class="d2" style="left:714px;top:452px">2.3 交货期或供货周期：2027 年 9 月 30 日前。</div><span class="r" style="left:1154px;top:457px">↵</span>
<div class="d2" style="left:714px;top:507px">2.4 技术要求：详见附件供货技术要求。</div><span class="r" style="left:1083px;top:512px">↵</span>
<div class="d2" style="left:714px;top:561px">2.5 标段划分及各标段具体内容：无标段划分。</div><span class="r" style="left:1146px;top:566px">↵</span>
<div class="d2" style="left:714px;top:615px">2.6</div>
<div class="d3 j" style="left:744px;top:617px;width:824px">、交货期：按指定时间（分批）送达。 2.7、服务要求：中标供应商按合同要求送货后，应按照使</div>
<div class="u" style="left:744px;top:638px;width:824px"></div>
<div class="d3 j" style="left:671px;top:664px;width:892px">用单位要求提供相应的技术服务及售后服务。 2.8、计价方式：综合到货含税价格（含货款、13%增值税、</div>
<div class="u" style="left:671px;top:684px;width:892px"></div>
<div class="d3 j" style="left:671px;top:699px;width:460px">运费、装卸费、包装费及其它杂费）。2.9、投标保证金</div>
<div class="d3" style="left:1151px;top:699px">20000 元整。</div>
<div class="u" style="left:671px;top:719px;width:590px"></div><span class="r" style="left:1290px;top:702px">↵</span>
<div class="r0" style="left:1133px;top:687px;width:124px;height:46px;border:3.500px solid #d0162a"></div>
<div class="a" style="left:671px;top:742px;font:500 30px/40px 'Liberation Sans','Noto Sans CJK SC',sans-serif;color:#000">3.</div>
<div class="a" style="left:711px;top:742px;font:500 30px/40px 'Liberation Sans','Noto Sans CJK SC',sans-serif;color:#000">投标人资格要求</div><span class="r" style="left:922px;top:754px">↵</span>
<div class="d2 j" style="left:714px;top:815px;width:856px">资格条件 1：投标人应为中华人民共和国境内注册的法人、法人分支机构或其他组织，具有承</div>
<div class="d2 j" style="left:671px;top:870px;width:870px">担民事责任的能力。提供统一社会信用代码的营业执照扫描件或其他证明设立登记的许可文件。</div><span class="r" style="left:1553px;top:875px">↵</span>
<svg class="o" width="1915" height="1075"><rect x="1251" y="210" width="23" height="3" fill="url(#sq)"/>
<path d="M635 951.500h36.500V987M1614 951.500h-36.500V987" fill="none" stroke="#a6a6a6"/></svg>
<span class="a" style="left:1115px;top:999px;font:18px/22px 'Liberation Sans',sans-serif;color:#888">2</span><span class="r" style="left:1123px;top:1000px">↵</span>
</div>

<span class="a st" style="left:10px">第 7 页，共 125 页</span>
<span class="a st" style="left:133px">49328 个字</span>
<span class="a st" style="left:247px">简体中文(中国大陆)</span>
<span class="a st" style="left:369px">修订: 关闭</span>
<span class="a st" style="left:492px">辅助功能: 调查</span>
<span class="a st" style="left:1878px">150%</span>
<div class="a clk" style="left:1838px;top:1040px;width:80px">16:07</div>
<div class="a clk" style="left:1835px;top:1060px;width:80px">2025-10-28</div>
</div>
</body></html>
